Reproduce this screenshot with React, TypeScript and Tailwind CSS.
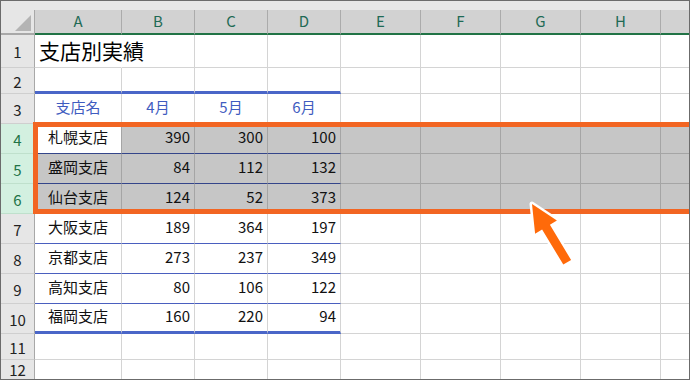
import React from 'react';

type Kind = 'plain' | 'selected';

interface RowDef {
  n: number;
  h: string;
  kind: Kind;
  cells: string[];
  head?: boolean;
  title?: boolean;
  last?: boolean;
  bottom?: 'thick' | 'thin' | 'none';
}

const colLetters = ['A', 'B', 'C', 'D', 'E', 'F', 'G', 'H', ''];
const widths = [
  'w-[87px]',
  'w-[73px]',
  'w-[73px]',
  'w-[73px]',
  'w-[80px]',
  'w-[80px]',
  'w-[80px]',
  'w-[80px]',
  'flex-1',
];

const rows: RowDef[] = [
  { n: 1, h: 'h-[33px]', kind: 'plain', cells: ['支店別実績'], title: true, bottom: 'none' },
  { n: 2, h: 'h-[26px]', kind: 'plain', cells: [], bottom: 'thick' },
  { n: 3, h: 'h-[30px]', kind: 'plain', cells: ['支店名', '4月', '5月', '6月'], head: true, bottom: 'thin' },
  { n: 4, h: 'h-[30px]', kind: 'selected', cells: ['札幌支店', '390', '300', '100'], bottom: 'thin' },
  { n: 5, h: 'h-[30px]', kind: 'selected', cells: ['盛岡支店', '84', '112', '132'], bottom: 'thin' },
  { n: 6, h: 'h-[30px]', kind: 'selected', cells: ['仙台支店', '124', '52', '373'], bottom: 'thin' },
  { n: 7, h: 'h-[30px]', kind: 'plain', cells: ['大阪支店', '189', '364', '197'], bottom: 'thin' },
  { n: 8, h: 'h-[30px]', kind: 'plain', cells: ['京都支店', '273', '237', '349'], bottom: 'thin' },
  { n: 9, h: 'h-[30px]', kind: 'plain', cells: ['高知支店', '80', '106', '122'], bottom: 'thin' },
  { n: 10, h: 'h-[30px]', kind: 'plain', cells: ['福岡支店', '160', '220', '94'], bottom: 'thick' },
  { n: 11, h: 'h-[26px]', kind: 'plain', cells: [], bottom: 'none' },
  { n: 12, h: 'h-[19px]', kind: 'plain', cells: [], bottom: 'none', last: true },
];

function cellClass(row: RowDef, i: number) {
  const sel = row.kind === 'selected';
  const inTable = i < 4;
  let cls = `${widths[i]} shrink-0 border-r flex items-center text-[15px] `;
  if (!row.last) cls += 'border-b ';

  // fill
  if (sel && !(row.n === 4 && i === 0)) cls += 'bg-[#c6c6c6] ';
  else cls += 'bg-white ';

  // vertical gridline (hidden behind the overflowing title)
  if (row.title && i === 0) cls += 'border-r-white ';
  else cls += sel ? 'border-r-[#a5a5a5] ' : 'border-r-[#d4d4d4] ';

  // horizontal line
  if (inTable && row.bottom === 'thick') cls += 'border-b-[3px] border-b-[#4a66c8] ';
  else if (inTable && row.bottom === 'thin') cls += sel ? 'border-b-[#34458a] ' : 'border-b-[#4a5fbf] ';
  else cls += sel ? 'border-b-[#a5a5a5] ' : 'border-b-[#d4d4d4] ';

  if (i === 8) cls += 'border-r-0 ';
  return cls;
}

function Row({ row }: { row: RowDef }) {
  const sel = row.kind === 'selected';
  return (
    <div className={`flex ${row.h}`}>
      <div
        className={`w-[34px] shrink-0 border-r flex justify-center text-[15px] ${
          row.last ? 'items-start pt-[2px] leading-none' : 'items-center pt-[3px] border-b'
        } ${
          sel
            ? 'bg-[#d3f0e0] text-[#217346] border-r-[#9fc9b0] border-b-[#bfe0cc]'
            : 'bg-[#e6e6e6] text-[#222] border-r-[#a8a8a8] border-b-[#cfcfcf]'
        }`}
      >
        {row.n}
      </div>
      {colLetters.map((_, i) => {
        const text = row.cells[i];
        if (row.title && i === 0) {
          return (
            <div key={i} className={`${cellClass(row, i)} relative z-10 overflow-visible`}>
              <span className="pl-[4px] text-[21px] text-black whitespace-nowrap">{text}</span>
            </div>
          );
        }
        let align = 'justify-center';
        let color = 'text-[#111]';
        if (row.head) color = 'text-[#3f5cc0]';
        else if (i > 0) align = 'justify-end pr-[4px]';
        return (
          <div key={i} className={`${cellClass(row, i)} ${align} ${color} pb-[2px]`}>
            {text}
          </div>
        );
      })}
    </div>
  );
}

export default function App() {
  return (
    <div className="relative w-[690px] h-[380px] overflow-hidden border border-[#6b6b6b] bg-white font-['Noto_Sans_CJK_JP',sans-serif]">
      {/* strip above the headers */}
      <div className="h-[9px] bg-[#e6e6e6]" />

      {/* column headers */}
      <div className="flex h-[25px]">
        <div className="w-[34px] shrink-0 bg-[#e6e6e6] border-r border-b-2 border-r-[#a8a8a8] border-b-[#a8a8a8] flex items-end justify-end pr-[2px] pb-[1px]">
          <svg width="17" height="17" viewBox="0 0 17 17">
            <polygon points="16,0 16,16 0,16" fill="#b4b4b4" />
          </svg>
        </div>
        {colLetters.map((c, i) => (
          <div
            key={i}
            className={`${widths[i]} shrink-0 bg-[#d2d2d2] border-b-2 border-b-[#217346] ${
              i === 8 ? '' : 'border-r border-r-[#ababab]'
            } flex items-center justify-center text-[15px] text-[#1f6a55]`}
          >
            {c}
          </div>
        ))}
      </div>

      {rows.map((r) => (
        <Row key={r.n} row={r} />
      ))}

      {/* orange highlight around selected rows */}
      <div className="absolute left-[32px] top-[121px] w-[700px] h-[92px] border-[5px] border-[#f26522]" />

      {/* arrow */}
      <svg
        className="absolute left-[521px] top-[195px]"
        width="60"
        height="76"
        viewBox="0 0 60 76"
      >
        <polygon
          points="10,8 34.9,24.5 27.9,28.8 49.1,64 41.3,68.6 20.1,33.4 13.1,37.7"
          fill="#ff6a0a"
          stroke="#ffffff"
          strokeWidth="5"
          strokeLinejoin="round"
          paintOrder="stroke"
        />
      </svg>
    </div>
  );
}
